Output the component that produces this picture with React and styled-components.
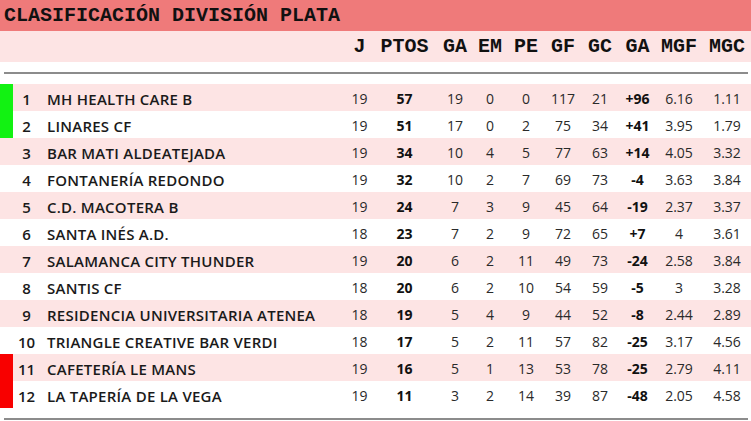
import React from "react";
import styled, { createGlobalStyle } from "styled-components";

const GlobalStyle = createGlobalStyle`
  html, body { margin: 0; padding: 0; background: #fff; }
  body { font-family: "Open Sans", "Liberation Sans", sans-serif; }
`;

// columns: bar, rank, name, J, PTOS, GA, EM, PE, GF, GC, GA, MGF, MGC
const COLS = "13px 27px 303px 33px 57px 44px 26px 46px 28px 46px 29px 54px 42px 3px";

const STATS = ["J", "PTOS", "GA", "EM", "PE", "GF", "GC", "GA", "MGF", "MGC"];

const TEAMS = [
  [1, "MH HEALTH CARE B", 19, 57, 19, 0, 0, 117, 21, "+96", "6.16", "1.11"],
  [2, "LINARES CF", 19, 51, 17, 0, 2, 75, 34, "+41", "3.95", "1.79"],
  [3, "BAR MATI ALDEATEJADA", 19, 34, 10, 4, 5, 77, 63, "+14", "4.05", "3.32"],
  [4, "FONTANERÍA REDONDO", 19, 32, 10, 2, 7, 69, 73, "-4", "3.63", "3.84"],
  [5, "C.D. MACOTERA B", 19, 24, 7, 3, 9, 45, 64, "-19", "2.37", "3.37"],
  [6, "SANTA INÉS A.D.", 18, 23, 7, 2, 9, 72, 65, "+7", "4", "3.61"],
  [7, "SALAMANCA CITY THUNDER", 19, 20, 6, 2, 11, 49, 73, "-24", "2.58", "3.84"],
  [8, "SANTIS CF", 18, 20, 6, 2, 10, 54, 59, "-5", "3", "3.28"],
  [9, "RESIDENCIA UNIVERSITARIA ATENEA", 18, 19, 5, 4, 9, 44, 52, "-8", "2.44", "2.89"],
  [10, "TRIANGLE CREATIVE BAR VERDI", 18, 17, 5, 2, 11, 57, 82, "-25", "3.17", "4.56"],
  [11, "CAFETERÍA LE MANS", 19, 16, 5, 1, 13, 53, 78, "-25", "2.79", "4.11"],
  [12, "LA TAPERÍA DE LA VEGA", 19, 11, 3, 2, 14, 39, 87, "-48", "2.05", "4.58"],
];

const zoneColor = (pos) => {
  if (pos <= 2) return "#12f212";
  if (pos >= 11) return "#f80000";
  return "transparent";
};

const Wrap = styled.div`
  width: 751px;
  height: 421px;
  overflow: hidden;
`;

const Title = styled.div`
  height: 31px;
  background: #ef7a7a;
  padding-left: 4px;
  display: flex;
  align-items: center;
  font-family: "Liberation Mono", "Courier New", monospace;
  font-weight: bold;
  font-size: 20px;
  color: #111;
  white-space: nowrap;
`;

const Row = styled.div`
  display: grid;
  grid-template-columns: ${COLS};
  height: ${(p) => p.$h}px;
  background: ${(p) => (p.$shade ? "#fde4e4" : "#fff")};
  align-items: stretch;
`;

const HeadCell = styled.div`
  display: flex;
  align-items: center;
  justify-content: center;
  font-family: "Liberation Mono", "Courier New", monospace;
  font-weight: bold;
  font-size: 20px;
  color: #111;
  white-space: nowrap;
  min-width: 0;
`;

const Rule = styled.div`
  height: 2px;
  margin: 10px 3px 10px 4px;
  background: #8c8c8c;
`;

const Bar = styled.div`
  background: ${(p) => p.$color};
`;

const Cell = styled.div`
  display: flex;
  align-items: center;
  justify-content: ${(p) => (p.$left ? "flex-start" : "center")};
  padding-left: ${(p) => (p.$left ? "7px" : "0")};
  padding-top: 2px;
  font-size: 14px;
  font-weight: ${(p) => (p.$bold ? 700 : 400)};
  color: ${(p) => (p.$bold ? "#111" : "#2a2a2a")};
  white-space: nowrap;
  min-width: 0;
`;

const Rank = styled(Cell)`
  font-size: 15px;
  font-weight: 600;
  color: #1a1a1a;
`;

const Name = styled(Cell)`
  font-size: 15px;
  letter-spacing: 0.25px;
  font-weight: 600;
  color: #1a1a1a;
`;

const Table = styled.div`
  display: flex;
  flex-direction: column;
`;

export default function App() {
  return (
    <Wrap>
      <GlobalStyle />
      <Title>CLASIFICACIÓN DIVISIÓN PLATA</Title>
      <Row $h={31} $shade>
        <div />
        <div />
        <div />
        {STATS.map((s, i) => (
          <HeadCell key={i}>{s}</HeadCell>
        ))}
      </Row>
      <Rule />
      <Table>
        {TEAMS.map((t, i) => {
          const [pos, name, ...vals] = t;
          return (
            <Row key={pos} $h={27} $shade={i % 2 === 0}>
              <Bar $color={zoneColor(pos)} />
              <Rank>{pos}</Rank>
              <Name $left>{name}</Name>
              {vals.map((v, j) => (
                <Cell key={j} $bold={j === 1 || j === 7}>
                  {v}
                </Cell>
              ))}
            </Row>
          );
        })}
      </Table>
      <Rule />
    </Wrap>
  );
}
